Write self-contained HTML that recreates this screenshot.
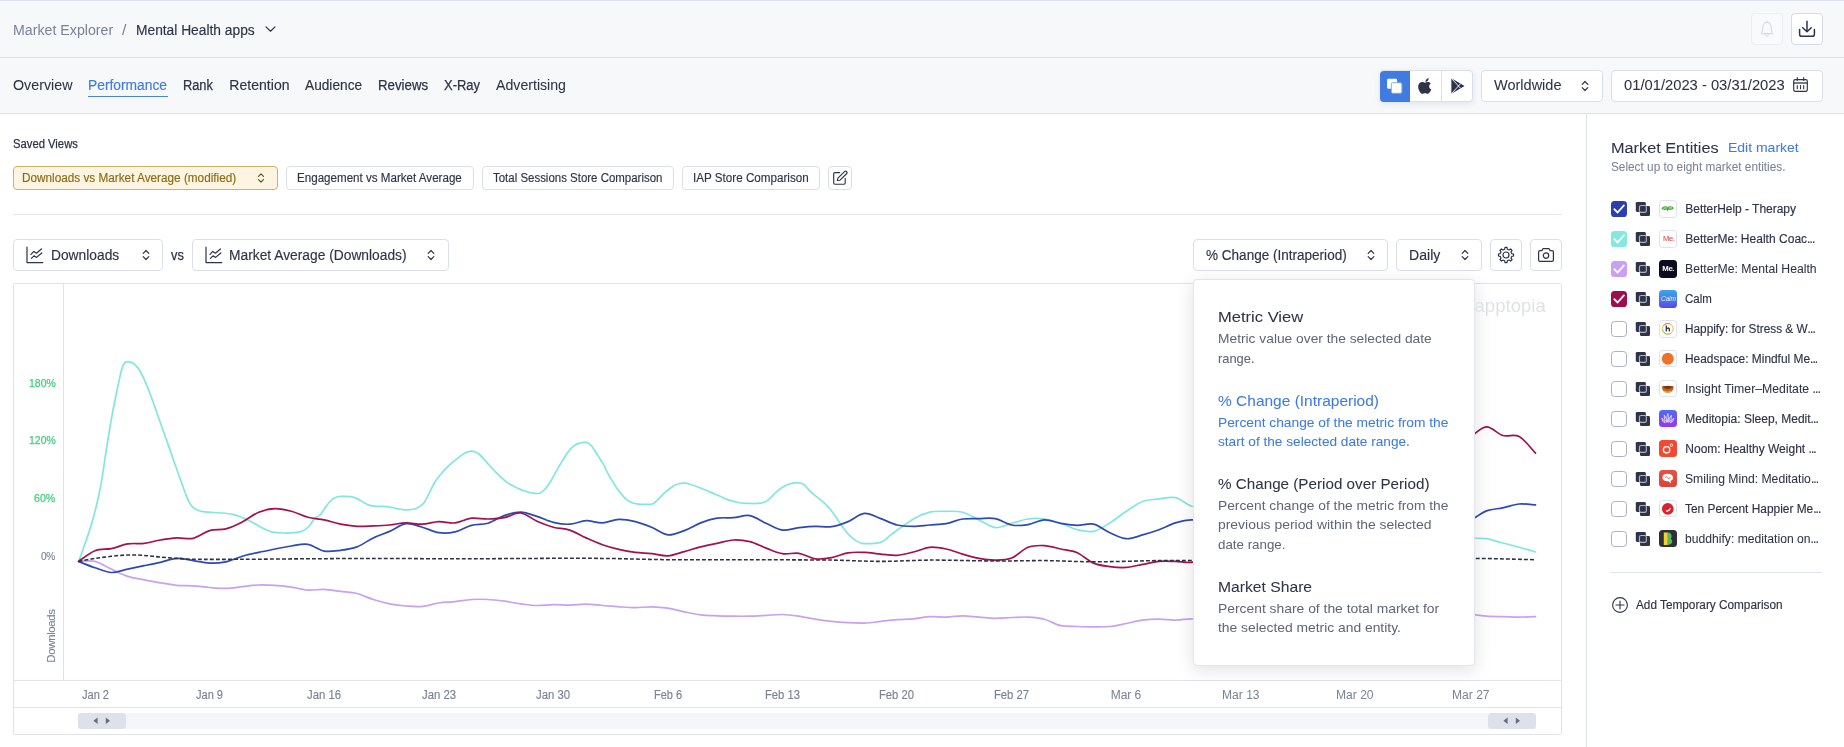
<!DOCTYPE html>
<html lang="en">
<head>
<meta charset="utf-8">
<title>Market Explorer - Mental Health apps</title>
<style>
*{box-sizing:border-box;margin:0;padding:0}
html,body{width:1844px;height:747px;overflow:hidden;background:#fff}
body{font-family:"Liberation Sans",sans-serif;position:relative;color:#2e3348}
.abs{position:absolute}
.t{position:absolute;white-space:nowrap;-webkit-text-stroke:0.25px currentColor}
.box{position:absolute;background:#fff;border:1px solid #dbdfe9;border-radius:4px}
.hdr{position:absolute;left:0;top:0;width:1844px;height:114px;background:#f7f8fa}
.hl{position:absolute;left:0;width:1844px;height:1px;background:#dde1ea}
svg{position:absolute;overflow:visible}
#w{position:absolute;left:0;top:0;width:1844px;height:747px;will-change:transform;background:#fff}
</style>
</head>
<body>
<div id="w">
<!-- header backgrounds -->
<div class="hdr"></div>
<div class="hl" style="top:0;background:#dfe3eb"></div>
<div class="hl" style="top:57px"></div>
<div class="hl" style="top:113px"></div>
<!-- sidebar border -->
<div class="abs" style="left:1586px;top:114px;width:1px;height:633px;background:#dfe2ec"></div>

<!-- breadcrumb chevron -->
<svg style="left:264px;top:24px" width="14" height="10" viewBox="0 0 14 10"><path d="M2 2.9 L6.5 7.2 L11 2.9" fill="none" stroke="#2e3348" stroke-width="1.2" stroke-linecap="round" stroke-linejoin="round"/></svg>

<!-- bell + download -->
<div class="box" style="left:1751px;top:13px;width:32px;height:32px;background:#f9fafc;border-color:#eceef4"></div>
<svg style="left:1751px;top:13px" width="32" height="32" viewBox="0 0 32 32"><path d="M10.4 20.6 C11.6 18.6 11.6 16.6 11.8 14.4 C12 11 13.8 9.4 16 9.4 C18.2 9.4 20 11 20.2 14.4 C20.4 16.6 20.4 18.6 21.6 20.6 Z M14.4 21 C14.6 22.6 15.2 23.2 16 23.2 C16.8 23.2 17.4 22.6 17.6 21 M16 9.4 V8" fill="none" stroke="#d9dce6" stroke-width="1.2" stroke-linejoin="round" stroke-linecap="round"/></svg>
<div class="box" style="left:1791px;top:13px;width:32px;height:32px;border-color:#d6dae6"></div>
<svg style="left:1791px;top:13px" width="32" height="32" viewBox="0 0 32 32"><path d="M16 8.2 V18.6 M11.7 14.8 L16 18.8 L20.3 14.8" fill="none" stroke="#2e3348" stroke-width="1.5" stroke-linecap="round" stroke-linejoin="round"/><path d="M8.6 16.4 V21.2 Q8.6 23.3 10.7 23.3 H21.3 Q23.4 23.3 23.4 21.2 V16.4" fill="none" stroke="#2e3348" stroke-width="1.5" stroke-linecap="round" stroke-linejoin="round"/></svg>

<!-- tab underline -->
<div class="abs" style="left:88px;top:96px;width:79.5px;height:1px;background:#4a82e2"></div>

<!-- store toggle -->
<div class="box" style="left:1380px;top:70px;width:93px;height:32px;box-shadow:0 2px 6px rgba(40,50,90,.10)"></div>
<div class="abs" style="left:1380px;top:70.5px;width:30px;height:31px;background:#3f7be0;border-radius:4px 0 0 4px"></div>
<div class="abs" style="left:1441px;top:71px;width:1px;height:30px;background:#dde1ec"></div>
<!-- stack icon white -->
<svg style="left:1386px;top:77px" width="20" height="20" viewBox="0 0 20 20"><rect x="1.1" y="1.7" width="10" height="10.1" rx="1.3" fill="#fff"/><rect x="5.3" y="5.7" width="10.6" height="10.6" rx="1.5" fill="#fff" stroke="#7aa4ea" stroke-width="0.9"/></svg>
<!-- apple -->
<svg style="left:1417.4px;top:76.9px" width="16.6" height="18.4" viewBox="0 0 18 20"><path d="M12.6 1.2 C12.7 2.3 12.3 3.3 11.7 4 C11.1 4.8 10.1 5.3 9.2 5.2 C9.1 4.2 9.6 3.2 10.1 2.6 C10.7 1.8 11.8 1.3 12.6 1.2 Z M15.6 13.6 C15.2 14.6 15 15 14.4 15.9 C13.7 17 12.7 18.3 11.5 18.3 C10.4 18.3 10.1 17.6 8.7 17.6 C7.3 17.6 6.9 18.3 5.8 18.3 C4.6 18.3 3.7 17.1 3 16 C1 13 0.8 9.4 2 7.6 C2.9 6.3 4.2 5.5 5.5 5.5 C6.8 5.5 7.6 6.2 8.7 6.2 C9.7 6.2 10.4 5.5 11.9 5.5 C13 5.5 14.2 6.1 15.1 7.2 C12.3 8.7 12.7 12.7 15.6 13.6 Z" fill="#2e3348"/></svg>
<!-- play -->
<svg style="left:1448px;top:76px" width="20" height="20" viewBox="0 0 20 20"><path d="M3.4 2.2 L16.6 10 L3.4 17.8 Z" fill="#2e3348"/><path d="M3.4 2.2 L12.6 12.4 M3.4 17.8 L12.6 7.6" stroke="#fff" stroke-width="0.9" fill="none"/></svg>

<!-- worldwide -->
<div class="box" style="left:1481px;top:70px;width:122px;height:32px"></div>
<svg style="left:1580px;top:79px" width="10" height="14" viewBox="0 0 10 14"><path d="M2.2 5.3 L5 2.5 L7.8 5.3 M2.2 8.7 L5 11.5 L7.8 8.7" fill="none" stroke="#2e3348" stroke-width="1.2" stroke-linecap="round" stroke-linejoin="round"/></svg>
<!-- date -->
<div class="box" style="left:1611px;top:70px;width:212px;height:32px"></div>
<svg style="left:1792px;top:76px" width="18" height="18" viewBox="0 0 18 18"><rect x="1.7" y="3.6" width="13.6" height="11.7" rx="1.6" fill="none" stroke="#2e3348" stroke-width="1.15"/><path d="M1.7 7 H15.3" stroke="#2e3348" stroke-width="1.3" fill="none"/><path d="M5.3 1.5 V4.5 M11.7 1.5 V4.5 M5.3 9.6 V12.7 M8.5 9.6 V12.7 M11.7 9.6 V12.7" stroke="#2e3348" stroke-width="1.1" fill="none" stroke-linecap="round"/></svg>

<!-- saved view chips -->
<div class="box" style="left:13px;top:166px;width:265px;height:24px;background:#fdf5e2;border-color:#d4af60"></div>
<svg style="left:255.5px;top:171px" width="10" height="14" viewBox="0 0 10 14"><path d="M2.5 5.3 L5 2.8 L7.5 5.3 M2.5 8.7 L5 11.2 L7.5 8.7" fill="none" stroke="#5a4a1a" stroke-width="1.1" stroke-linecap="round" stroke-linejoin="round"/></svg>
<div class="box" style="left:286px;top:166px;width:188px;height:24px"></div>
<div class="box" style="left:482px;top:166px;width:192px;height:24px"></div>
<div class="box" style="left:682px;top:166px;width:138px;height:24px"></div>
<div class="box" style="left:828px;top:166px;width:24px;height:24px"></div>
<svg style="left:832px;top:170px" width="16" height="16" viewBox="0 0 16 16"><path d="M7.7 2.6 H2.9 Q1.7 2.6 1.7 3.8 V13 Q1.7 14.2 2.9 14.2 H12 Q13.2 14.2 13.2 13 V8.4" fill="none" stroke="#2e3348" stroke-width="1.15" stroke-linecap="round"/><path d="M5.3 10.5 L5.9 8.2 L12.8 1.4 Q13.6 0.7 14.4 1.5 L14.8 1.9 Q15.5 2.7 14.8 3.5 L8 10.2 Z" fill="none" stroke="#2e3348" stroke-width="1.15" stroke-linejoin="round"/></svg>

<div class="abs" style="left:13px;top:214px;width:1549px;height:1px;background:#e3e6ee"></div>

<!-- metric selectors -->
<div class="box" style="left:13px;top:239px;width:150px;height:32px"></div>
<svg style="left:24.5px;top:245px" width="20" height="20" viewBox="0 0 20 20"><path d="M2 2.2 V17.6 H17.8" fill="none" stroke="#2e3348" stroke-width="1.2" stroke-linecap="round" stroke-linejoin="round"/><path d="M6 9.4 L8.8 6.4 L11.4 8.2 L16.4 4 M6.4 13.4 L9 10.8 L11.6 12.4 L16.8 8" fill="none" stroke="#2e3348" stroke-width="1.2" stroke-linecap="round" stroke-linejoin="round"/></svg>
<svg style="left:140.5px;top:248px" width="10" height="14" viewBox="0 0 10 14"><path d="M2.2 5.3 L5 2.5 L7.8 5.3 M2.2 8.7 L5 11.5 L7.8 8.7" fill="none" stroke="#2e3348" stroke-width="1.2" stroke-linecap="round" stroke-linejoin="round"/></svg>
<div class="box" style="left:192px;top:239px;width:257px;height:32px"></div>
<svg style="left:204px;top:245px" width="20" height="20" viewBox="0 0 20 20"><path d="M2 2.2 V17.6 H17.8" fill="none" stroke="#2e3348" stroke-width="1.2" stroke-linecap="round" stroke-linejoin="round"/><path d="M6 9.4 L8.8 6.4 L11.4 8.2 L16.4 4 M6.4 13.4 L9 10.8 L11.6 12.4 L16.8 8" fill="none" stroke="#2e3348" stroke-width="1.2" stroke-linecap="round" stroke-linejoin="round"/></svg>
<svg style="left:426px;top:248px" width="10" height="14" viewBox="0 0 10 14"><path d="M2.2 5.3 L5 2.5 L7.8 5.3 M2.2 8.7 L5 11.5 L7.8 8.7" fill="none" stroke="#2e3348" stroke-width="1.2" stroke-linecap="round" stroke-linejoin="round"/></svg>

<div class="box" style="left:1193px;top:239px;width:195px;height:32px"></div>
<svg style="left:1365.5px;top:248px" width="10" height="14" viewBox="0 0 10 14"><path d="M2.2 5.3 L5 2.5 L7.8 5.3 M2.2 8.7 L5 11.5 L7.8 8.7" fill="none" stroke="#2e3348" stroke-width="1.2" stroke-linecap="round" stroke-linejoin="round"/></svg>
<div class="box" style="left:1396px;top:239px;width:86px;height:32px"></div>
<svg style="left:1459.7px;top:248px" width="10" height="14" viewBox="0 0 10 14"><path d="M2.2 5.3 L5 2.5 L7.8 5.3 M2.2 8.7 L5 11.5 L7.8 8.7" fill="none" stroke="#2e3348" stroke-width="1.2" stroke-linecap="round" stroke-linejoin="round"/></svg>
<div class="box" style="left:1490px;top:239px;width:32px;height:32px"></div>
<svg style="left:1496px;top:245px" width="20" height="20" viewBox="0 0 20 20"><circle cx="10" cy="10" r="3" fill="none" stroke="#2e3348" stroke-width="1.2"/><path d="M8.62 4.26L8.99 2.47L11.01 2.47L11.38 4.26L13.08 4.97L14.61 3.96L16.04 5.39L15.03 6.92L15.74 8.62L17.53 8.99L17.53 11.01L15.74 11.38L15.03 13.08L16.04 14.61L14.61 16.04L13.08 15.03L11.38 15.74L11.01 17.53L8.99 17.53L8.62 15.74L6.92 15.03L5.39 16.04L3.96 14.61L4.97 13.08L4.26 11.38L2.47 11.01L2.47 8.99L4.26 8.62L4.97 6.92L3.96 5.39L5.39 3.96L6.92 4.97Z" fill="none" stroke="#2e3348" stroke-width="1.2" stroke-linejoin="round"/></svg>
<div class="box" style="left:1530px;top:239px;width:32px;height:32px"></div>
<svg style="left:1536px;top:245px" width="20" height="20" viewBox="0 0 20 20"><path d="M2.6 7 Q2.6 5.6 4 5.6 H5.8 L7.1 3.7 H12.9 L14.2 5.6 H16 Q17.4 5.6 17.4 7 V15 Q17.4 16.3 16 16.3 H4 Q2.6 16.3 2.6 15 Z" fill="none" stroke="#2e3348" stroke-width="1.2" stroke-linejoin="round"/><circle cx="10" cy="10.6" r="2.7" fill="none" stroke="#2e3348" stroke-width="1.2"/></svg>

<!-- chart frame -->
<div class="abs" style="left:13px;top:283px;width:1549px;height:452px;border:1px solid #dfe2ec;background:#fff;border-radius:1.5px"></div>
<div class="abs" style="left:63px;top:284px;width:1px;height:397px;background:#dfe2ec"></div>
<div class="abs" style="left:14px;top:680px;width:1547px;height:1px;background:#dfe2ec"></div>
<div class="abs" style="left:14px;top:707px;width:1547px;height:1px;background:#dfe2ec"></div>
<!-- scrollbar -->
<div class="abs" style="left:78px;top:713px;width:1458px;height:16px;background:#f5f6f9"></div>
<div class="abs" style="left:78px;top:713px;width:48px;height:16px;background:#dde1ea;border-radius:3.5px"></div>
<div class="abs" style="left:1488px;top:713px;width:48px;height:16px;background:#dde1ea;border-radius:3.5px"></div>
<svg style="left:78px;top:713px" width="48" height="16" viewBox="0 0 48 16"><path d="M19.6 4.6 V11 L15.4 7.8 Z M27.8 4.6 V11 L32 7.8 Z" fill="#666c80"/></svg>
<svg style="left:1488px;top:713px" width="48" height="16" viewBox="0 0 48 16"><path d="M19.6 4.6 V11 L15.4 7.8 Z M27.8 4.6 V11 L32 7.8 Z" fill="#666c80"/></svg>
<div class="t" style="left:51px;top:636px;font-size:11.5px;line-height:14px;color:#7b8296;transform:translate(-50%,-50%) rotate(-90deg);letter-spacing:-0.4px;-webkit-text-stroke-width:0.1px">Downloads</div>

<!-- chart lines -->
<svg style="left:0;top:0" width="1844" height="747" viewBox="0 0 1844 747">
<path d="M78.6 561.4C80.0 557.5 84.4 545.9 86.9 538.3C89.2 531.3 91.6 524.7 93.9 515.8C96.2 506.9 98.8 496.1 100.9 484.9C102.8 474.9 104.6 460.0 106.5 448.4C108.4 436.7 110.3 424.9 112.2 414.6C114.1 404.4 116.2 394.2 117.8 386.5C119.2 379.9 120.8 372.3 122.0 368.3C122.9 365.1 123.9 363.7 124.8 362.6C125.7 361.5 126.7 361.8 127.6 361.8C128.8 361.8 130.4 361.8 131.8 362.6C133.5 363.5 135.6 365.0 137.5 367.4C139.4 369.8 141.2 373.2 143.1 377.0C145.0 380.8 146.8 385.5 148.7 390.2C150.6 394.9 152.4 400.2 154.3 405.4C156.6 411.9 159.9 421.3 162.7 429.3C165.5 437.3 168.4 445.4 171.2 453.4C174.0 461.4 177.3 470.7 179.6 477.3C181.5 482.6 183.6 488.6 185.2 492.8C186.6 496.4 188.0 500.1 189.4 502.6C190.8 505.1 192.3 506.8 193.7 508.0C195.3 509.4 197.4 510.2 199.3 510.8C201.2 511.4 203.0 511.7 204.9 511.9C208.7 512.3 217.1 512.6 221.8 513.0C225.5 513.3 229.7 513.7 233.0 514.4C235.8 515.0 238.6 516.1 241.4 517.2C244.2 518.3 247.1 519.5 249.9 520.9C252.7 522.3 255.5 524.2 258.3 525.7C261.1 527.2 264.4 528.8 266.7 529.9C268.6 530.8 270.5 531.8 272.4 532.1C275.2 532.6 279.9 532.9 283.6 533.0C287.3 533.1 291.8 533.0 294.8 532.7C297.2 532.5 299.5 532.3 301.9 531.3C304.2 530.3 306.8 528.6 308.9 526.5C310.8 524.6 312.6 520.5 314.5 518.6C316.3 516.7 318.2 516.9 320.0 515.0C322.0 512.9 324.3 508.7 326.4 506.0C328.5 503.3 330.9 500.4 332.8 498.9C334.4 497.6 336.1 497.1 337.7 496.7C339.6 496.3 342.0 496.4 344.1 496.4C346.2 496.4 348.4 496.3 350.5 496.7C352.6 497.1 354.8 497.7 356.9 498.6C359.0 499.5 361.2 501.1 363.4 502.2C365.5 503.3 367.7 504.7 369.8 505.4C371.9 506.1 374.1 506.2 376.2 506.3C379.1 506.5 384.0 506.2 387.5 506.6C390.7 507.0 394.2 508.1 397.1 508.6C399.8 509.1 402.4 509.8 405.1 509.9C407.8 510.0 410.8 509.8 413.2 509.2C415.3 508.7 417.7 507.8 419.6 506.6C421.2 505.6 422.8 504.4 424.4 502.2C426.0 500.0 427.6 496.3 429.2 493.2C430.8 490.1 432.4 486.3 434.0 483.5C435.6 480.7 437.3 478.5 438.9 476.5C441.3 473.6 445.3 469.0 448.5 465.9C451.7 462.8 455.4 459.9 458.1 457.8C460.3 456.1 462.7 454.4 464.6 453.3C466.2 452.4 467.9 451.7 469.4 451.4C470.8 451.1 472.1 451.0 473.5 451.4C475.1 451.8 477.2 452.5 479.0 454.0C481.2 455.9 484.3 459.7 487.0 462.6C489.9 465.8 493.5 470.0 496.7 473.2C499.9 476.4 503.1 479.5 506.3 481.9C509.5 484.3 512.8 485.8 516.0 487.4C519.2 488.9 522.7 490.2 525.6 491.2C528.3 492.1 531.3 492.9 533.6 493.2C535.5 493.5 537.5 493.8 539.4 493.2C541.2 492.6 543.1 491.3 544.9 489.3C546.9 487.2 549.2 483.8 551.3 480.3C553.7 476.4 556.6 470.4 559.3 465.9C562.0 461.4 564.9 456.3 567.3 453.0C569.5 450.0 571.6 447.6 573.8 445.9C575.9 444.2 578.2 443.6 580.2 443.0C582.1 442.4 584.2 442.1 586.0 442.4C587.6 442.7 589.2 443.4 590.8 445.0C592.5 446.8 594.5 450.2 596.3 453.0C598.5 456.5 602.6 462.9 604.3 465.9C605.0 467.1 605.7 469.4 606.4 470.7C607.8 473.4 610.7 478.4 612.8 481.9C614.9 485.4 617.1 488.8 619.3 491.6C621.4 494.4 623.6 497.0 625.7 498.9C627.8 500.8 630.0 501.9 632.1 502.8C634.2 503.7 636.4 503.9 638.5 504.1C640.9 504.4 644.2 504.4 646.6 504.4C648.7 504.4 651.1 504.6 653.0 503.8C654.6 503.1 656.2 501.1 657.8 499.6C659.7 497.8 662.1 495.1 664.2 493.2C666.6 491.0 669.9 488.3 672.3 486.7C674.4 485.3 676.7 484.4 678.7 483.8C680.5 483.3 682.4 483.1 684.2 483.2C686.1 483.3 688.0 483.6 689.9 484.2C692.5 484.9 696.4 486.5 699.6 487.7C702.8 488.9 706.0 490.3 709.2 491.6C712.4 492.9 715.7 494.3 718.9 495.7C722.1 497.1 725.3 498.8 728.5 499.9C731.7 501.0 734.9 501.9 738.1 502.5C741.3 503.1 744.6 503.2 747.8 503.4C751.0 503.5 754.5 503.7 757.4 503.4C760.1 503.2 763.2 502.7 765.4 501.8C767.0 501.1 768.7 499.5 770.3 498.0C772.2 496.3 774.6 493.4 776.7 491.6C779.1 489.6 782.0 487.5 784.7 486.1C787.4 484.7 790.3 483.7 792.7 483.2C794.9 482.7 797.3 482.6 799.2 482.9C800.8 483.1 802.4 483.6 804.0 484.8C805.6 486.0 807.2 488.3 808.8 489.9C810.7 491.7 813.1 493.9 815.2 495.7C817.6 497.8 820.9 500.0 823.3 502.2C825.4 504.1 827.6 506.1 829.7 508.6C831.8 511.1 834.0 514.3 836.1 517.3C838.2 520.3 840.4 524.0 842.5 526.9C844.6 529.8 846.9 532.6 849.0 534.9C851.1 537.1 853.3 539.0 855.4 540.4C857.5 541.8 859.7 542.8 861.8 543.3C864.2 543.8 867.1 543.7 869.8 543.6C872.8 543.5 877.1 543.1 879.5 542.6C881.1 542.2 882.7 541.5 884.3 540.4C886.2 539.1 888.6 536.5 890.7 534.9C895.6 531.3 907.0 522.8 913.5 519.0C918.9 515.8 924.4 513.5 929.8 512.2C935.2 510.9 940.7 511.3 946.2 511.3C951.7 511.3 957.1 510.8 962.6 512.2C968.1 513.6 973.5 517.3 979.0 519.9C984.4 522.5 989.9 527.0 995.3 527.6C1000.8 528.2 1006.2 524.7 1011.7 523.3C1017.2 521.9 1022.6 519.7 1028.1 519.0C1033.5 518.3 1039.0 518.3 1044.4 519.0C1049.9 519.7 1055.3 521.5 1060.8 523.3C1066.3 525.1 1071.8 528.4 1077.2 529.7C1082.6 531.0 1088.1 532.5 1093.5 531.4C1099.0 530.3 1104.4 526.2 1109.9 522.9C1115.4 519.6 1120.8 514.9 1126.3 511.3C1131.7 507.7 1137.2 503.6 1142.6 501.5C1148.0 499.4 1153.5 499.5 1159.0 498.9C1164.5 498.3 1169.9 496.4 1175.4 497.6C1180.9 498.8 1186.3 504.6 1191.8 506.2C1197.2 507.8 1202.7 506.5 1208.1 507.0C1213.5 507.5 1219.0 508.2 1224.5 509.2C1232.7 510.6 1246.3 513.6 1257.2 515.6C1270.8 518.1 1289.9 521.7 1306.3 524.2C1322.7 526.7 1339.1 528.8 1355.5 530.6C1371.9 532.4 1388.2 533.7 1404.6 534.9C1421.0 536.1 1442.8 537.3 1453.7 537.9C1459.1 538.2 1464.6 538.2 1470.0 538.3C1475.5 538.4 1480.9 537.9 1486.4 538.7C1491.9 539.5 1497.3 541.6 1502.8 543.0C1508.3 544.4 1513.8 545.8 1519.2 547.3C1524.6 548.8 1532.8 551.2 1535.5 552.0" fill="none" stroke="#82e6e0" stroke-width="1.7" stroke-linecap="round" stroke-linejoin="round"/>
<path d="M78.6 561.4C81.3 561.4 89.5 560.1 95.0 561.4C100.4 562.7 105.9 566.6 111.3 569.1C116.8 571.6 122.2 574.6 127.7 576.4C133.2 578.2 138.7 578.7 144.1 579.8C149.5 580.9 155.0 581.9 160.4 582.8C165.9 583.7 171.3 584.9 176.8 585.4C182.3 585.9 187.7 585.5 193.2 585.8C198.7 586.1 204.1 587.1 209.6 587.5C215.0 587.9 220.5 588.5 225.9 588.4C231.4 588.3 236.8 587.3 242.3 586.7C247.8 586.1 253.2 585.2 258.7 585.0C264.1 584.8 269.6 585.1 275.0 585.4C280.4 585.8 285.9 586.3 291.4 587.1C296.9 587.9 302.4 589.7 307.8 590.1C313.2 590.5 318.7 589.1 324.1 589.3C329.6 589.5 335.0 590.7 340.5 591.4C346.0 592.1 351.4 592.2 356.9 593.5C362.4 594.8 367.9 597.8 373.3 599.5C378.7 601.2 384.2 602.7 389.6 603.8C395.1 604.9 400.5 605.6 406.0 606.0C411.5 606.4 416.9 606.9 422.4 606.4C427.8 605.9 433.3 603.8 438.7 603.0C444.1 602.2 449.6 602.3 455.1 601.7C460.6 601.1 466.0 599.9 471.5 599.5C477.0 599.1 482.4 599.2 487.9 599.5C493.3 599.8 498.8 600.5 504.2 601.2C509.6 601.9 515.1 603.1 520.6 603.8C526.1 604.5 531.5 605.4 537.0 605.5C542.4 605.6 547.9 604.8 553.3 604.7C558.8 604.6 564.2 605.2 569.7 605.1C575.2 605.0 580.7 604.1 586.1 604.2C591.5 604.3 597.0 605.1 602.4 605.5C607.8 605.9 613.3 606.4 618.8 606.8C624.3 607.2 629.7 607.7 635.2 607.7C640.7 607.7 646.2 606.7 651.6 606.8C657.0 606.9 662.5 607.3 667.9 608.1C673.3 609.0 678.8 610.8 684.3 611.9C689.8 613.0 695.2 614.2 700.7 614.9C706.1 615.5 711.6 615.6 717.0 615.8C722.5 616.0 727.9 616.1 733.4 616.2C738.9 616.3 744.3 616.3 749.8 616.2C755.2 616.1 760.7 615.7 766.1 615.4C771.6 615.1 777.0 614.4 782.5 614.5C788.0 614.6 793.4 615.4 798.9 616.2C804.4 617.0 809.8 618.3 815.3 619.2C820.7 620.1 826.2 620.8 831.6 621.4C837.1 622.0 842.5 622.4 848.0 622.7C853.5 623.0 858.9 623.3 864.4 623.1C869.8 622.9 875.3 622.0 880.7 621.4C886.2 620.8 891.6 620.1 897.1 619.7C902.6 619.3 908.0 619.3 913.5 618.8C918.9 618.3 924.4 617.0 929.8 616.7C935.2 616.4 940.7 617.2 946.2 617.1C951.7 617.0 957.1 615.8 962.6 615.8C968.1 615.8 973.5 616.7 979.0 617.1C984.4 617.5 989.9 618.3 995.3 618.4C1000.8 618.5 1006.2 617.7 1011.7 617.5C1017.2 617.3 1022.6 616.8 1028.1 617.1C1033.5 617.4 1039.0 617.8 1044.4 619.2C1049.9 620.6 1055.3 624.5 1060.8 625.7C1066.3 626.9 1071.8 626.3 1077.2 626.5C1082.6 626.7 1088.1 626.9 1093.5 626.9C1099.0 626.9 1104.4 627.1 1109.9 626.5C1115.4 625.9 1120.8 624.6 1126.3 623.5C1131.7 622.4 1137.2 620.8 1142.6 620.1C1148.0 619.4 1153.5 619.2 1159.0 619.2C1164.5 619.2 1169.9 620.2 1175.4 620.1C1180.9 620.0 1186.3 618.9 1191.8 618.8C1213.6 618.4 1273.6 618.0 1306.3 617.5C1333.6 617.1 1360.9 616.3 1388.2 615.8C1415.5 615.3 1453.6 614.4 1470.0 614.5C1475.5 614.5 1480.9 615.8 1486.4 616.2C1491.9 616.6 1497.3 616.6 1502.8 616.7C1508.3 616.8 1513.8 617.1 1519.2 617.1C1524.6 617.1 1532.8 616.8 1535.5 616.7" fill="none" stroke="#c9a0f3" stroke-width="1.7" stroke-linecap="round" stroke-linejoin="round"/>
<path d="M78.6 561.4C81.3 562.5 89.5 565.9 95.0 567.8C100.4 569.6 105.9 572.3 111.3 572.5C116.8 572.7 122.2 570.2 127.7 569.1C133.2 568.0 138.7 566.8 144.1 565.7C149.5 564.6 155.0 563.5 160.4 562.3C165.9 561.1 171.3 558.7 176.8 558.4C182.3 558.1 187.7 559.8 193.2 560.6C198.7 561.4 204.1 562.9 209.6 563.1C215.0 563.3 220.5 562.9 225.9 561.8C231.4 560.7 236.8 557.9 242.3 556.3C247.8 554.7 253.2 553.6 258.7 552.4C264.1 551.2 269.6 550.1 275.0 549.0C280.4 547.9 285.9 546.8 291.4 546.0C296.9 545.2 302.4 543.4 307.8 544.3C313.2 545.1 318.7 550.1 324.1 551.1C329.6 552.1 335.0 551.0 340.5 550.3C346.0 549.6 351.4 549.0 356.9 546.9C362.4 544.8 367.9 540.5 373.3 537.9C378.7 535.3 384.2 533.8 389.6 531.4C395.1 529.0 400.5 524.4 406.0 523.7C411.5 523.0 416.9 525.7 422.4 527.2C427.8 528.7 433.3 531.9 438.7 532.7C444.1 533.5 449.6 533.1 455.1 531.9C460.6 530.7 466.0 526.8 471.5 525.4C477.0 524.0 482.4 524.9 487.9 523.3C493.3 521.7 498.8 517.4 504.2 515.6C509.6 513.8 515.1 512.1 520.6 512.2C526.1 512.3 531.5 514.7 537.0 516.4C542.4 518.1 547.9 521.1 553.3 522.4C558.8 523.7 564.2 524.5 569.7 524.2C575.2 523.9 580.7 520.9 586.1 520.7C591.5 520.5 597.0 523.1 602.4 522.9C607.8 522.7 613.3 519.6 618.8 519.4C624.3 519.2 629.7 520.3 635.2 521.6C640.7 522.9 646.2 525.0 651.6 527.2C657.0 529.4 662.5 534.3 667.9 534.9C673.3 535.5 678.8 532.6 684.3 530.6C689.8 528.6 695.2 525.0 700.7 522.9C706.1 520.8 711.6 519.1 717.0 518.2C722.5 517.3 727.9 518.1 733.4 517.7C738.9 517.3 744.3 514.7 749.8 515.6C755.2 516.5 760.7 520.9 766.1 523.3C771.6 525.7 777.0 529.4 782.5 530.1C788.0 530.8 793.4 528.2 798.9 527.6C804.4 527.0 809.8 526.4 815.3 526.3C820.7 526.2 826.2 527.5 831.6 526.7C837.1 525.9 842.5 523.8 848.0 521.6C853.5 519.4 858.9 513.9 864.4 513.4C869.8 512.9 875.3 516.7 880.7 518.6C886.2 520.5 891.6 523.7 897.1 525.0C902.6 526.3 908.0 526.3 913.5 526.3C918.9 526.3 924.4 525.4 929.8 525.0C935.2 524.6 940.7 524.7 946.2 523.7C951.7 522.7 957.1 519.8 962.6 519.0C968.1 518.2 973.5 518.7 979.0 518.6C984.4 518.5 989.9 517.5 995.3 518.6C1000.8 519.7 1006.2 524.0 1011.7 525.0C1017.2 526.0 1022.6 525.5 1028.1 524.6C1033.5 523.8 1039.0 520.1 1044.4 519.9C1049.9 519.7 1055.3 522.4 1060.8 523.3C1066.3 524.2 1071.8 525.2 1077.2 525.4C1082.6 525.5 1088.1 523.0 1093.5 524.2C1099.0 525.4 1104.4 530.3 1109.9 532.7C1115.4 535.1 1120.8 538.3 1126.3 538.7C1131.7 539.1 1137.2 536.4 1142.6 534.9C1148.0 533.4 1153.5 531.7 1159.0 529.7C1164.5 527.7 1169.9 524.5 1175.4 522.9C1180.9 521.3 1186.3 520.0 1191.8 519.9C1205.4 519.8 1235.4 521.3 1257.2 522.0C1279.0 522.7 1300.9 523.7 1322.7 524.2C1344.5 524.7 1366.4 525.0 1388.2 525.0C1410.0 525.0 1440.1 525.0 1453.7 524.2C1459.1 523.9 1464.6 522.5 1470.0 520.3C1475.5 518.1 1480.9 513.0 1486.4 510.9C1491.9 508.8 1497.3 509.0 1502.8 507.9C1508.3 506.8 1513.8 504.5 1519.2 504.0C1524.6 503.5 1532.8 504.8 1535.5 504.9" fill="none" stroke="#2f49b3" stroke-width="1.7" stroke-linecap="round" stroke-linejoin="round"/>
<path d="M78.6 561.4C81.3 559.6 89.5 552.8 95.0 550.7C100.4 548.6 105.9 549.7 111.3 548.6C116.8 547.5 122.2 544.8 127.7 543.9C133.2 543.0 138.7 544.0 144.1 543.4C149.5 542.8 155.0 540.9 160.4 540.0C165.9 539.1 171.3 538.2 176.8 537.9C182.3 537.6 187.7 539.5 193.2 538.3C198.7 537.1 204.1 532.2 209.6 530.6C215.0 529.0 220.5 530.3 225.9 528.9C231.4 527.5 236.8 524.8 242.3 522.0C247.8 519.2 253.2 514.4 258.7 512.2C264.1 510.0 269.6 508.8 275.0 508.7C280.4 508.5 285.9 509.9 291.4 511.3C296.9 512.7 302.4 515.9 307.8 517.3C313.2 518.7 318.7 518.8 324.1 519.9C329.6 521.0 335.0 523.1 340.5 524.2C346.0 525.3 351.4 526.0 356.9 526.3C362.4 526.6 367.9 526.1 373.3 525.9C378.7 525.7 384.2 525.5 389.6 525.0C395.1 524.5 400.5 523.0 406.0 522.9C411.5 522.8 416.9 524.4 422.4 524.2C427.8 524.0 433.3 521.8 438.7 521.6C444.1 521.4 449.6 523.5 455.1 522.9C460.6 522.3 466.0 518.8 471.5 518.2C477.0 517.6 482.4 519.1 487.9 519.0C493.3 518.9 498.8 518.7 504.2 517.7C509.6 516.7 515.1 512.4 520.6 513.0C526.1 513.6 531.5 518.8 537.0 521.2C542.4 523.6 547.9 525.7 553.3 527.2C558.8 528.7 564.2 528.3 569.7 530.1C575.2 531.9 580.7 535.5 586.1 537.9C591.5 540.3 597.0 542.8 602.4 544.7C607.8 546.6 613.3 548.1 618.8 549.4C624.3 550.7 629.7 551.7 635.2 552.4C640.7 553.1 646.2 553.1 651.6 553.7C657.0 554.3 662.5 556.1 667.9 555.8C673.3 555.4 678.8 553.1 684.3 551.6C689.8 550.1 695.2 548.3 700.7 546.9C706.1 545.5 711.6 544.5 717.0 543.4C722.5 542.2 727.9 540.3 733.4 540.0C738.9 539.7 744.3 540.4 749.8 541.7C755.2 543.0 760.7 546.1 766.1 548.1C771.6 550.1 777.0 552.8 782.5 553.7C788.0 554.6 793.4 552.5 798.9 553.3C804.4 554.1 809.8 558.1 815.3 558.8C820.7 559.5 826.2 558.6 831.6 557.6C837.1 556.6 842.5 553.7 848.0 552.8C853.5 551.9 858.9 552.2 864.4 552.4C869.8 552.6 875.3 553.6 880.7 554.1C886.2 554.6 891.6 555.7 897.1 555.4C902.6 555.1 908.0 553.4 913.5 552.0C918.9 550.7 924.4 547.8 929.8 547.3C935.2 546.8 940.7 547.9 946.2 549.0C951.7 550.1 957.1 552.5 962.6 554.1C968.1 555.7 973.5 557.4 979.0 558.4C984.4 559.4 989.9 560.2 995.3 560.1C1000.8 560.0 1006.2 560.1 1011.7 558.0C1017.2 555.9 1022.6 549.4 1028.1 547.3C1033.5 545.2 1039.0 545.3 1044.4 545.6C1049.9 545.9 1055.3 547.8 1060.8 549.0C1066.3 550.2 1071.8 550.4 1077.2 552.8C1082.6 555.1 1088.1 560.8 1093.5 563.1C1099.0 565.4 1104.4 565.9 1109.9 566.6C1115.4 567.3 1120.8 567.8 1126.3 567.4C1131.7 567.0 1137.2 565.4 1142.6 564.4C1148.0 563.4 1153.5 561.9 1159.0 561.4C1164.5 560.9 1169.9 561.3 1175.4 561.4C1180.9 561.5 1186.3 563.1 1191.8 562.3C1200.0 561.1 1213.6 558.6 1224.5 554.1C1238.1 548.5 1257.2 537.0 1273.6 528.4C1290.0 519.8 1306.3 511.3 1322.7 502.7C1339.1 494.1 1355.4 485.6 1371.8 477.0C1388.2 468.4 1407.2 456.2 1420.9 451.3C1431.8 447.4 1445.5 450.2 1453.7 447.9C1459.1 446.3 1464.6 440.7 1470.0 437.2C1475.5 433.7 1480.9 427.2 1486.4 426.9C1491.9 426.6 1497.3 433.9 1502.8 435.5C1508.3 437.1 1513.8 433.7 1519.2 436.6C1524.6 439.5 1532.8 450.4 1535.5 453.1" fill="none" stroke="#a3114e" stroke-width="1.7" stroke-linecap="round" stroke-linejoin="round"/>
<path d="M78.6 561.4C81.3 560.9 89.5 559.2 95.0 558.4C100.4 557.6 105.9 556.9 111.3 556.3C116.8 555.7 122.2 555.1 127.7 555.0C133.2 554.9 138.7 555.0 144.1 555.4C149.5 555.7 155.0 556.6 160.4 557.1C165.9 557.6 171.3 558.0 176.8 558.4C182.3 558.8 187.7 559.2 193.2 559.3C204.1 559.4 225.9 559.4 242.3 559.3C261.4 559.2 286.0 558.9 307.8 558.8C329.6 558.7 351.5 558.4 373.3 558.4C397.9 558.4 427.8 558.8 455.1 558.8C482.4 558.8 512.5 558.5 537.0 558.4C558.8 558.3 580.6 558.2 602.4 558.4C624.2 558.6 646.1 559.5 667.9 559.7C689.7 559.9 711.6 559.6 733.4 559.7C760.7 559.8 807.0 559.8 831.6 560.1C848.0 560.3 864.3 561.4 880.7 561.4C897.1 561.4 913.4 560.2 929.8 560.1C948.9 560.0 976.2 560.9 995.3 561.0C1011.7 561.1 1028.0 560.5 1044.4 560.6C1060.8 560.7 1077.1 561.8 1093.5 561.8C1112.6 561.8 1142.6 560.8 1159.0 560.6C1169.9 560.5 1180.9 560.7 1191.8 560.6C1216.3 560.5 1268.1 560.0 1306.3 559.7C1352.7 559.3 1431.8 558.4 1470.0 558.4C1491.8 558.4 1524.6 559.5 1535.5 559.7" fill="none" stroke="#2b3044" stroke-dasharray="3.9 2.1" stroke-width="1.55" stroke-linecap="butt" stroke-linejoin="round"/>
</svg>

<!-- dropdown panel -->
<div class="abs" style="left:1193px;top:279px;width:282px;height:387px;background:#fff;border:1px solid #e3e5ee;border-radius:4px;box-shadow:0 4px 18px rgba(20,25,40,.13)"></div>

<!-- sidebar -->
<div class="abs" style="left:1611px;top:201px;width:16px;height:16px;border-radius:3.6px;background:#2a40b0"></div><svg style="left:1611px;top:201px" width="16" height="16" viewBox="0 0 16 16"><path d="M3.3 8.2 L6.6 11.5 L12.9 4.4" fill="none" stroke="#fff" stroke-width="1.8" stroke-linecap="round" stroke-linejoin="round"/></svg>
<svg style="left:1635.4px;top:201.4px" width="16" height="16" viewBox="0 0 16 16"><rect x="0.8" y="0.9" width="10" height="10" rx="1.4" fill="#2e3348"/><rect x="5" y="5" width="10" height="10.1" rx="1.4" fill="#2e3348"/><rect x="4.45" y="4.45" width="6.9" height="6.9" rx="1.6" fill="none" stroke="#aeb2c0" stroke-width="1.15"/></svg>
<div class="abs" style="left:1659.3px;top:200.2px;width:17.6px;height:17.6px;border-radius:3.5px;overflow:hidden;background:#fff;border:1px solid #dde2ec;"><svg style="left:-1px;top:-1px" width="17.6" height="17.6" viewBox="0 0 17.6 17.6"><path d="M2.4 8.2 Q4.4 5.4 8 6.6 L8.6 7.6 L9.4 6.6 Q13 5.4 15 8 Q12.6 10.8 9.6 9.4 L8.4 11.6 L7.9 9.4 Q4.6 10.8 2.4 8.2 Z" fill="#3aa52e"/><path d="M4.6 8.1 L7.4 8 M10 8 L12.8 7.9" stroke="#fff" stroke-width=".8" stroke-linecap="round"/></svg></div>
<div class="abs" style="left:1611px;top:230.9px;width:16px;height:16px;border-radius:3.6px;background:#84e8de"></div><svg style="left:1611px;top:230.9px" width="16" height="16" viewBox="0 0 16 16"><path d="M3.3 8.2 L6.6 11.5 L12.9 4.4" fill="none" stroke="#fff" stroke-width="1.8" stroke-linecap="round" stroke-linejoin="round"/></svg>
<svg style="left:1635.4px;top:231.3px" width="16" height="16" viewBox="0 0 16 16"><rect x="0.8" y="0.9" width="10" height="10" rx="1.4" fill="#2e3348"/><rect x="5" y="5" width="10" height="10.1" rx="1.4" fill="#2e3348"/><rect x="4.45" y="4.45" width="6.9" height="6.9" rx="1.6" fill="none" stroke="#aeb2c0" stroke-width="1.15"/></svg>
<div class="abs" style="left:1659.3px;top:230.1px;width:17.6px;height:17.6px;border-radius:3.5px;overflow:hidden;background:#fff;border:1px solid #dde2ec;"><div class="t" style="left:2.6px;top:3.4px;font-size:7.6px;line-height:9px;color:#dc3535;letter-spacing:-.25px;-webkit-text-stroke:0">Me.</div></div>
<div class="abs" style="left:1611px;top:260.9px;width:16px;height:16px;border-radius:3.6px;background:#c9a0f5"></div><svg style="left:1611px;top:260.9px" width="16" height="16" viewBox="0 0 16 16"><path d="M3.3 8.2 L6.6 11.5 L12.9 4.4" fill="none" stroke="#fff" stroke-width="1.8" stroke-linecap="round" stroke-linejoin="round"/></svg>
<svg style="left:1635.4px;top:261.3px" width="16" height="16" viewBox="0 0 16 16"><rect x="0.8" y="0.9" width="10" height="10" rx="1.4" fill="#2e3348"/><rect x="5" y="5" width="10" height="10.1" rx="1.4" fill="#2e3348"/><rect x="4.45" y="4.45" width="6.9" height="6.9" rx="1.6" fill="none" stroke="#aeb2c0" stroke-width="1.15"/></svg>
<div class="abs" style="left:1659.3px;top:260.1px;width:17.6px;height:17.6px;border-radius:3.5px;overflow:hidden;background:#0b0c1e;"><div class="t" style="left:3px;top:4.2px;font-size:7.8px;line-height:9px;color:#fff;font-weight:bold;letter-spacing:-.4px;-webkit-text-stroke:0">Me.</div></div>
<div class="abs" style="left:1611px;top:290.9px;width:16px;height:16px;border-radius:3.6px;background:#9f0d4b"></div><svg style="left:1611px;top:290.9px" width="16" height="16" viewBox="0 0 16 16"><path d="M3.3 8.2 L6.6 11.5 L12.9 4.4" fill="none" stroke="#fff" stroke-width="1.8" stroke-linecap="round" stroke-linejoin="round"/></svg>
<svg style="left:1635.4px;top:291.2px" width="16" height="16" viewBox="0 0 16 16"><rect x="0.8" y="0.9" width="10" height="10" rx="1.4" fill="#2e3348"/><rect x="5" y="5" width="10" height="10.1" rx="1.4" fill="#2e3348"/><rect x="4.45" y="4.45" width="6.9" height="6.9" rx="1.6" fill="none" stroke="#aeb2c0" stroke-width="1.15"/></svg>
<div class="abs" style="left:1659.3px;top:290.1px;width:17.6px;height:17.6px;border-radius:3.5px;overflow:hidden;background:linear-gradient(180deg,#3aa6ea 0%,#4a78ea 55%,#5b46e2 100%);"><div class="t" style="left:1.8px;top:5px;font-size:6.6px;line-height:8px;color:#e6eeff;font-style:italic;letter-spacing:-.2px;-webkit-text-stroke:0">Calm</div></div>
<div class="abs" style="left:1611px;top:320.8px;width:16px;height:16px;border-radius:3.6px;background:#fff;border:1px solid #a9b0c8"></div>
<svg style="left:1635.4px;top:321.2px" width="16" height="16" viewBox="0 0 16 16"><rect x="0.8" y="0.9" width="10" height="10" rx="1.4" fill="#2e3348"/><rect x="5" y="5" width="10" height="10.1" rx="1.4" fill="#2e3348"/><rect x="4.45" y="4.45" width="6.9" height="6.9" rx="1.6" fill="none" stroke="#aeb2c0" stroke-width="1.15"/></svg>
<div class="abs" style="left:1659.3px;top:320px;width:17.6px;height:17.6px;border-radius:3.5px;overflow:hidden;background:#fff;border:1px solid #dde2ec;"><svg style="left:-1px;top:-1px" width="17.6" height="17.6" viewBox="0 0 17.6 17.6"><circle cx="8.8" cy="8.8" r="5.4" fill="#fff" stroke="#f4b63c" stroke-width="1"/><path d="M3.6 10.2 A5.4 5.4 0 0 0 12.6 12.6" stroke="#7ccf6a" stroke-width="1" fill="none"/><path d="M4.4 5.6 A5.4 5.4 0 0 1 11 3.9" stroke="#ef6a8a" stroke-width="1" fill="none"/><path d="M7.3 5.6 V11.6 M7.3 9.2 Q8.9 7.2 10.3 8.6 V11.6" stroke="#2e3348" stroke-width="1.3" fill="none"/></svg></div>
<div class="abs" style="left:1611px;top:350.8px;width:16px;height:16px;border-radius:3.6px;background:#fff;border:1px solid #a9b0c8"></div>
<svg style="left:1635.4px;top:351.1px" width="16" height="16" viewBox="0 0 16 16"><rect x="0.8" y="0.9" width="10" height="10" rx="1.4" fill="#2e3348"/><rect x="5" y="5" width="10" height="10.1" rx="1.4" fill="#2e3348"/><rect x="4.45" y="4.45" width="6.9" height="6.9" rx="1.6" fill="none" stroke="#aeb2c0" stroke-width="1.15"/></svg>
<div class="abs" style="left:1659.3px;top:349.9px;width:17.6px;height:17.6px;border-radius:3.5px;overflow:hidden;background:#fff;border:1px solid #dde2ec;"><svg style="left:-1px;top:-1px" width="17.6" height="17.6" viewBox="0 0 17.6 17.6"><circle cx="8.8" cy="8.8" r="6" fill="#ee7326"/></svg></div>
<div class="abs" style="left:1611px;top:380.7px;width:16px;height:16px;border-radius:3.6px;background:#fff;border:1px solid #a9b0c8"></div>
<svg style="left:1635.4px;top:381.1px" width="16" height="16" viewBox="0 0 16 16"><rect x="0.8" y="0.9" width="10" height="10" rx="1.4" fill="#2e3348"/><rect x="5" y="5" width="10" height="10.1" rx="1.4" fill="#2e3348"/><rect x="4.45" y="4.45" width="6.9" height="6.9" rx="1.6" fill="none" stroke="#aeb2c0" stroke-width="1.15"/></svg>
<div class="abs" style="left:1659.3px;top:379.9px;width:17.6px;height:17.6px;border-radius:3.5px;overflow:hidden;background:#fff;border:1px solid #dde2ec;"><svg style="left:-1px;top:-1px" width="17.6" height="17.6" viewBox="0 0 17.6 17.6"><path d="M2.8 6.4 Q8.8 5 14.8 6.4 Q14.4 12.6 8.8 12.8 Q3.2 12.6 2.8 6.4 Z" fill="#c0651c"/><path d="M3.4 6.6 Q8.8 5.6 14.2 6.6 Q12 9 8.8 9 Q5.6 9 3.4 6.6 Z" fill="#7a3410"/><path d="M5 11.2 Q8.8 13 12.6 11.2" stroke="#f2b25a" stroke-width="1" fill="none"/></svg></div>
<div class="abs" style="left:1611px;top:410.6px;width:16px;height:16px;border-radius:3.6px;background:#fff;border:1px solid #a9b0c8"></div>
<svg style="left:1635.4px;top:411px" width="16" height="16" viewBox="0 0 16 16"><rect x="0.8" y="0.9" width="10" height="10" rx="1.4" fill="#2e3348"/><rect x="5" y="5" width="10" height="10.1" rx="1.4" fill="#2e3348"/><rect x="4.45" y="4.45" width="6.9" height="6.9" rx="1.6" fill="none" stroke="#aeb2c0" stroke-width="1.15"/></svg>
<div class="abs" style="left:1659.3px;top:409.8px;width:17.6px;height:17.6px;border-radius:3.5px;overflow:hidden;background:linear-gradient(180deg,#4d6cf6 0%,#7a49f2 60%,#9a35ee 100%);"><svg style="left:0px;top:0px" width="17.6" height="17.6" viewBox="0 0 17.6 17.6"><path d="M8.8 3.6 Q10.8 6.8 8.8 12.2 Q6.8 6.8 8.8 3.6 Z M5.2 5.2 Q7.6 7.4 7.8 12.4 Q4.6 10.6 5.2 5.2 Z M12.4 5.2 Q10 7.4 9.8 12.4 Q13 10.6 12.4 5.2 Z M2.8 8 Q4.8 9.6 6.2 12.8 Q3 12.2 2.8 8 Z M14.8 8 Q12.8 9.6 11.4 12.8 Q14.6 12.2 14.8 8 Z" fill="none" stroke="#efe9ff" stroke-width=".8"/></svg></div>
<div class="abs" style="left:1611px;top:440.6px;width:16px;height:16px;border-radius:3.6px;background:#fff;border:1px solid #a9b0c8"></div>
<svg style="left:1635.4px;top:441px" width="16" height="16" viewBox="0 0 16 16"><rect x="0.8" y="0.9" width="10" height="10" rx="1.4" fill="#2e3348"/><rect x="5" y="5" width="10" height="10.1" rx="1.4" fill="#2e3348"/><rect x="4.45" y="4.45" width="6.9" height="6.9" rx="1.6" fill="none" stroke="#aeb2c0" stroke-width="1.15"/></svg>
<div class="abs" style="left:1659.3px;top:439.8px;width:17.6px;height:17.6px;border-radius:3.5px;overflow:hidden;background:#f04a30;"><svg style="left:0px;top:0px" width="17.6" height="17.6" viewBox="0 0 17.6 17.6"><circle cx="7.6" cy="9.8" r="3.2" fill="none" stroke="#fff" stroke-width="1.3"/><circle cx="12.4" cy="5.2" r="1.25" fill="none" stroke="#fff" stroke-width=".9"/></svg></div>
<div class="abs" style="left:1611px;top:470.6px;width:16px;height:16px;border-radius:3.6px;background:#fff;border:1px solid #a9b0c8"></div>
<svg style="left:1635.4px;top:470.9px" width="16" height="16" viewBox="0 0 16 16"><rect x="0.8" y="0.9" width="10" height="10" rx="1.4" fill="#2e3348"/><rect x="5" y="5" width="10" height="10.1" rx="1.4" fill="#2e3348"/><rect x="4.45" y="4.45" width="6.9" height="6.9" rx="1.6" fill="none" stroke="#aeb2c0" stroke-width="1.15"/></svg>
<div class="abs" style="left:1659.3px;top:469.8px;width:17.6px;height:17.6px;border-radius:3.5px;overflow:hidden;background:linear-gradient(180deg,#e8503f,#d9463a);"><svg style="left:0px;top:0px" width="17.6" height="17.6" viewBox="0 0 17.6 17.6"><path d="M3.4 7.6 Q3.4 3.8 8.4 3.8 Q14 3.8 14 8 Q14 10.4 11.6 10.8 L11.8 13.4 L9.4 11.2 Q3.4 11.4 3.4 7.6 Z" fill="#fff"/><path d="M6.2 7.4 Q7.4 6 8.6 7.6 M9 8.6 Q10.4 8.8 11.2 7.2" stroke="#dd4a3d" stroke-width=".9" fill="none"/></svg></div>
<div class="abs" style="left:1611px;top:500.5px;width:16px;height:16px;border-radius:3.6px;background:#fff;border:1px solid #a9b0c8"></div>
<svg style="left:1635.4px;top:500.9px" width="16" height="16" viewBox="0 0 16 16"><rect x="0.8" y="0.9" width="10" height="10" rx="1.4" fill="#2e3348"/><rect x="5" y="5" width="10" height="10.1" rx="1.4" fill="#2e3348"/><rect x="4.45" y="4.45" width="6.9" height="6.9" rx="1.6" fill="none" stroke="#aeb2c0" stroke-width="1.15"/></svg>
<div class="abs" style="left:1659.3px;top:499.7px;width:17.6px;height:17.6px;border-radius:3.5px;overflow:hidden;background:#fff;border:1px solid #dde2ec;"><svg style="left:-1px;top:-1px" width="17.6" height="17.6" viewBox="0 0 17.6 17.6"><circle cx="8.8" cy="8.8" r="5.9" fill="#e01f2c"/><path d="M7.4 11 Q10 11.6 11.2 8.6" stroke="#fff" stroke-width="1.3" fill="none" stroke-linecap="round"/></svg></div>
<div class="abs" style="left:1611px;top:530.5px;width:16px;height:16px;border-radius:3.6px;background:#fff;border:1px solid #a9b0c8"></div>
<svg style="left:1635.4px;top:530.9px" width="16" height="16" viewBox="0 0 16 16"><rect x="0.8" y="0.9" width="10" height="10" rx="1.4" fill="#2e3348"/><rect x="5" y="5" width="10" height="10.1" rx="1.4" fill="#2e3348"/><rect x="4.45" y="4.45" width="6.9" height="6.9" rx="1.6" fill="none" stroke="#aeb2c0" stroke-width="1.15"/></svg>
<div class="abs" style="left:1659.3px;top:529.7px;width:17.6px;height:17.6px;border-radius:3.5px;overflow:hidden;background:#303135;"><svg style="left:0px;top:0px" width="17.6" height="17.6" viewBox="0 0 17.6 17.6"><path d="M4.8 2.4 H8.8 V15 H4.8 Z" fill="#f4d032"/><path d="M8.8 2.6 Q12.6 3 12.6 6.2 Q12.6 7.6 11.8 8.4 Q13.2 9.6 13.2 11.6 Q13.2 14.6 8.8 15 Z" fill="#5cb85c"/></svg></div>
<div class="abs" style="left:1611px;top:572px;width:211px;height:1px;background:#dfe2ec"></div>
<svg style="left:1611px;top:596px" width="18" height="18" viewBox="0 0 18 18"><circle cx="9" cy="9" r="7.4" fill="none" stroke="#2e3348" stroke-width="1.1"/><path d="M9 5 V13 M5 9 H13" stroke="#2e3348" stroke-width="1.1" fill="none" stroke-linecap="round"/></svg>

<div class="t" style="left:13.1px;top:21.1px;font-size:14px;line-height:18px;color:#7b8296;letter-spacing:-0.000px;transform:scaleX(1.0140);transform-origin:0 50%;-webkit-text-stroke-width:0px;">Market Explorer</div>
<div class="t" style="left:122.3px;top:21.1px;font-size:14px;line-height:18px;color:#7b8296;letter-spacing:1.020px;transform:scaleX(1.1200);transform-origin:0 50%;-webkit-text-stroke-width:0px;">/</div>
<div class="t" style="left:136.2px;top:21.1px;font-size:14px;line-height:18px;color:#2e3348;letter-spacing:0.000px;transform:scaleX(0.9839);transform-origin:0 50%;-webkit-text-stroke-width:0.15px;">Mental Health apps</div>
<div class="t" style="left:13.1px;top:76.3px;font-size:14px;line-height:18px;color:#2e3348;letter-spacing:0.000px;transform:scaleX(1.0195);transform-origin:0 50%;-webkit-text-stroke-width:0.05px;">Overview</div>
<div class="t" style="left:88.1px;top:76.3px;font-size:14px;line-height:18px;color:#3f7be0;letter-spacing:0.000px;transform:scaleX(0.9856);transform-origin:0 50%;-webkit-text-stroke-width:0.15px;">Performance</div>
<div class="t" style="left:183.3px;top:76.3px;font-size:14px;line-height:18px;color:#2e3348;letter-spacing:0.000px;transform:scaleX(0.9147);transform-origin:0 50%;-webkit-text-stroke-width:0.25px;">Rank</div>
<div class="t" style="left:229.3px;top:76.3px;font-size:14px;line-height:18px;color:#2e3348;letter-spacing:0.033px;-webkit-text-stroke-width:0.15px;">Retention</div>
<div class="t" style="left:305.0px;top:76.3px;font-size:14px;line-height:18px;color:#2e3348;letter-spacing:0.000px;transform:scaleX(0.9779);transform-origin:0 50%;-webkit-text-stroke-width:0.15px;">Audience</div>
<div class="t" style="left:378.3px;top:76.3px;font-size:14px;line-height:18px;color:#2e3348;letter-spacing:0.000px;transform:scaleX(0.9470);transform-origin:0 50%;-webkit-text-stroke-width:0.25px;">Reviews</div>
<div class="t" style="left:443.8px;top:76.3px;font-size:14px;line-height:18px;color:#2e3348;letter-spacing:0.000px;transform:scaleX(0.9253);transform-origin:0 50%;-webkit-text-stroke-width:0.25px;">X-Ray</div>
<div class="t" style="left:495.6px;top:76.3px;font-size:14px;line-height:18px;color:#2e3348;letter-spacing:-0.000px;transform:scaleX(1.0106);transform-origin:0 50%;-webkit-text-stroke-width:0.05px;">Advertising</div>
<div class="t" style="left:1493.9px;top:76.3px;font-size:14px;line-height:18px;color:#2e3348;letter-spacing:0.000px;transform:scaleX(1.0367);transform-origin:0 50%;-webkit-text-stroke-width:0.05px;">Worldwide</div>
<div class="t" style="left:1623.7px;top:76.3px;font-size:14px;line-height:18px;color:#2e3348;letter-spacing:0.000px;transform:scaleX(1.0532);transform-origin:0 50%;-webkit-text-stroke-width:0.05px;">01/01/2023 - 03/31/2023</div>
<div class="t" style="left:13.1px;top:135.9px;font-size:12.5px;line-height:16px;color:#2e3348;letter-spacing:0.000px;transform:scaleX(0.9008);transform-origin:0 50%;-webkit-text-stroke-width:0.25px;">Saved Views</div>
<div class="t" style="left:22.2px;top:170.0px;font-size:12px;line-height:16px;color:#8a6a14;letter-spacing:0.000px;transform:scaleX(0.9801);transform-origin:0 50%;-webkit-text-stroke-width:0.15px;">Downloads vs Market Average (modified)</div>
<div class="t" style="left:297.2px;top:170.0px;font-size:12px;line-height:16px;color:#2e3348;letter-spacing:0.000px;transform:scaleX(0.9663);transform-origin:0 50%;-webkit-text-stroke-width:0.15px;">Engagement vs Market Average</div>
<div class="t" style="left:492.9px;top:170.0px;font-size:12px;line-height:16px;color:#2e3348;letter-spacing:0.000px;transform:scaleX(0.9548);transform-origin:0 50%;-webkit-text-stroke-width:0.15px;">Total Sessions Store Comparison</div>
<div class="t" style="left:693.0px;top:170.0px;font-size:12px;line-height:16px;color:#2e3348;letter-spacing:0.000px;transform:scaleX(0.9709);transform-origin:0 50%;-webkit-text-stroke-width:0.15px;">IAP Store Comparison</div>
<div class="t" style="left:50.5px;top:246.1px;font-size:14px;line-height:18px;color:#2e3348;letter-spacing:0.000px;transform:scaleX(0.9846);transform-origin:0 50%;-webkit-text-stroke-width:0.15px;">Downloads</div>
<div class="t" style="left:171.2px;top:246.1px;font-size:14px;line-height:18px;color:#2e3348;letter-spacing:0.000px;transform:scaleX(0.9143);transform-origin:0 50%;-webkit-text-stroke-width:0.25px;">vs</div>
<div class="t" style="left:229.4px;top:246.1px;font-size:14px;line-height:18px;color:#2e3348;letter-spacing:0.000px;transform:scaleX(0.9851);transform-origin:0 50%;-webkit-text-stroke-width:0.15px;">Market Average (Downloads)</div>
<div class="t" style="left:1205.7px;top:246.1px;font-size:14px;line-height:18px;color:#2e3348;letter-spacing:0.000px;transform:scaleX(0.9668);transform-origin:0 50%;-webkit-text-stroke-width:0.15px;">% Change (Intraperiod)</div>
<div class="t" style="left:1409.1px;top:246.1px;font-size:14px;line-height:18px;color:#2e3348;letter-spacing:0.019px;-webkit-text-stroke-width:0.15px;">Daily</div>
<div class="t" style="left:1217.9px;top:307.1px;font-size:15px;line-height:20px;color:#2e3348;letter-spacing:0.000px;transform:scaleX(1.1029);transform-origin:0 50%;-webkit-text-stroke-width:0.05px;">Metric View</div>
<div class="t" style="left:1217.9px;top:330.2px;font-size:13px;line-height:17px;color:#5f6578;letter-spacing:0.000px;transform:scaleX(1.0600);transform-origin:0 50%;-webkit-text-stroke-width:0px;">Metric value over the selected date</div>
<div class="t" style="left:1217.9px;top:350.0px;font-size:13px;line-height:17px;color:#5f6578;letter-spacing:0.000px;transform:scaleX(0.9898);transform-origin:0 50%;-webkit-text-stroke-width:0.05px;">range.</div>
<div class="t" style="left:1217.9px;top:390.9px;font-size:15px;line-height:20px;color:#3f7be0;letter-spacing:0.000px;transform:scaleX(1.0326);transform-origin:0 50%;-webkit-text-stroke-width:0.05px;">% Change (Intraperiod)</div>
<div class="t" style="left:1217.9px;top:414.0px;font-size:13px;line-height:17px;color:#3f7be0;letter-spacing:0.000px;transform:scaleX(1.0593);transform-origin:0 50%;-webkit-text-stroke-width:0.05px;">Percent change of the metric from the</div>
<div class="t" style="left:1217.9px;top:433.2px;font-size:13px;line-height:17px;color:#3f7be0;letter-spacing:0.000px;transform:scaleX(1.0495);transform-origin:0 50%;-webkit-text-stroke-width:0.05px;">start of the selected date range.</div>
<div class="t" style="left:1217.9px;top:474.1px;font-size:15px;line-height:20px;color:#2e3348;letter-spacing:0.000px;transform:scaleX(1.0146);transform-origin:0 50%;-webkit-text-stroke-width:0.05px;">% Change (Period over Period)</div>
<div class="t" style="left:1217.9px;top:497.2px;font-size:13px;line-height:17px;color:#5f6578;letter-spacing:0.000px;transform:scaleX(1.0593);transform-origin:0 50%;-webkit-text-stroke-width:0px;">Percent change of the metric from the</div>
<div class="t" style="left:1217.9px;top:516.2px;font-size:13px;line-height:17px;color:#5f6578;letter-spacing:0.000px;transform:scaleX(1.0699);transform-origin:0 50%;-webkit-text-stroke-width:0px;">previous period within the selected</div>
<div class="t" style="left:1217.9px;top:536.0px;font-size:13px;line-height:17px;color:#5f6578;letter-spacing:0.000px;transform:scaleX(1.0261);transform-origin:0 50%;-webkit-text-stroke-width:0px;">date range.</div>
<div class="t" style="left:1217.9px;top:577.2px;font-size:15px;line-height:20px;color:#2e3348;letter-spacing:0.000px;transform:scaleX(1.0450);transform-origin:0 50%;-webkit-text-stroke-width:0.05px;">Market Share</div>
<div class="t" style="left:1217.9px;top:600.0px;font-size:13px;line-height:17px;color:#5f6578;letter-spacing:-0.000px;transform:scaleX(1.0661);transform-origin:0 50%;-webkit-text-stroke-width:0px;">Percent share of the total market for</div>
<div class="t" style="left:1217.9px;top:619.3px;font-size:13px;line-height:17px;color:#5f6578;letter-spacing:0.000px;transform:scaleX(1.0649);transform-origin:0 50%;-webkit-text-stroke-width:0px;">the selected metric and entity.</div>
<div class="t" style="left:1474.5px;top:294.0px;font-size:18.5px;line-height:24px;color:#dfe2e7;letter-spacing:0.031px;-webkit-text-stroke:0;">apptopia</div>
<div class="t" style="left:1610.8px;top:137.7px;font-size:15.2px;line-height:20px;color:#2e3348;letter-spacing:-0.000px;transform:scaleX(1.0711);transform-origin:0 50%;-webkit-text-stroke-width:0.05px;">Market Entities</div>
<div class="t" style="left:1728.4px;top:138.5px;font-size:13.5px;line-height:18px;color:#3f7be0;letter-spacing:0.000px;transform:scaleX(1.0354);transform-origin:0 50%;-webkit-text-stroke-width:0.05px;">Edit market</div>
<div class="t" style="left:1610.7px;top:158.9px;font-size:12px;line-height:16px;color:#7b8296;letter-spacing:0.000px;transform:scaleX(0.9834);transform-origin:0 50%;-webkit-text-stroke-width:0.05px;">Select up to eight market entities.</div>
<div class="t" style="left:1685.3px;top:201.1px;font-size:12px;line-height:16px;color:#2e3348;letter-spacing:-0.025px;-webkit-text-stroke-width:0.15px;">BetterHelp - Therapy</div>
<div class="t" style="left:1685.3px;top:231.0px;font-size:12px;line-height:16px;color:#2e3348;letter-spacing:0.020px;-webkit-text-stroke-width:0.15px;">BetterMe: Health Coac<span style="letter-spacing:-0.9px">...</span></div>
<div class="t" style="left:1685.3px;top:261.0px;font-size:12px;line-height:16px;color:#2e3348;letter-spacing:0.000px;transform:scaleX(1.0170);transform-origin:0 50%;-webkit-text-stroke-width:0.05px;">BetterMe: Mental Health</div>
<div class="t" style="left:1685.3px;top:290.9px;font-size:12px;line-height:16px;color:#2e3348;letter-spacing:0.000px;transform:scaleX(0.9566);transform-origin:0 50%;-webkit-text-stroke-width:0.15px;">Calm</div>
<div class="t" style="left:1685.3px;top:320.9px;font-size:12px;line-height:16px;color:#2e3348;letter-spacing:0.000px;transform:scaleX(0.9832);transform-origin:0 50%;-webkit-text-stroke-width:0.15px;">Happify: for Stress &amp; W<span style="letter-spacing:-0.9px">...</span></div>
<div class="t" style="left:1685.3px;top:350.9px;font-size:12px;line-height:16px;color:#2e3348;letter-spacing:0.000px;transform:scaleX(0.9918);transform-origin:0 50%;-webkit-text-stroke-width:0.15px;">Headspace: Mindful Me<span style="letter-spacing:-0.9px">...</span></div>
<div class="t" style="left:1685.3px;top:380.8px;font-size:12px;line-height:16px;color:#2e3348;letter-spacing:0.000px;transform:scaleX(1.0224);transform-origin:0 50%;-webkit-text-stroke-width:0.05px;">Insight Timer–Meditate <span style="letter-spacing:-0.9px">...</span></div>
<div class="t" style="left:1685.3px;top:410.8px;font-size:12px;line-height:16px;color:#2e3348;letter-spacing:-0.005px;-webkit-text-stroke-width:0.15px;">Meditopia: Sleep, Medit<span style="letter-spacing:-0.9px">...</span></div>
<div class="t" style="left:1685.3px;top:440.7px;font-size:12px;line-height:16px;color:#2e3348;letter-spacing:0.001px;-webkit-text-stroke-width:0.15px;">Noom: Healthy Weight <span style="letter-spacing:-0.9px">...</span></div>
<div class="t" style="left:1685.3px;top:470.6px;font-size:12px;line-height:16px;color:#2e3348;letter-spacing:0.000px;transform:scaleX(1.0147);transform-origin:0 50%;-webkit-text-stroke-width:0.05px;">Smiling Mind: Meditatio<span style="letter-spacing:-0.9px">...</span></div>
<div class="t" style="left:1685.3px;top:500.6px;font-size:12px;line-height:16px;color:#2e3348;letter-spacing:0.000px;transform:scaleX(0.9904);transform-origin:0 50%;-webkit-text-stroke-width:0.15px;">Ten Percent Happier Me<span style="letter-spacing:-0.9px">...</span></div>
<div class="t" style="left:1685.3px;top:530.5px;font-size:12px;line-height:16px;color:#2e3348;letter-spacing:0.000px;transform:scaleX(1.0121);transform-origin:0 50%;-webkit-text-stroke-width:0.05px;">buddhify: meditation on<span style="letter-spacing:-0.9px">...</span></div>
<div class="t" style="left:1636.2px;top:596.9px;font-size:12px;line-height:16px;color:#2e3348;letter-spacing:0.000px;transform:scaleX(0.9820);transform-origin:0 50%;-webkit-text-stroke-width:0.15px;">Add Temporary Comparison</div>
<div class="t" style="left:28.8px;top:375.6px;font-size:11.5px;line-height:15px;color:#3ecf7a;letter-spacing:0.000px;transform:scaleX(0.9109);transform-origin:0 50%;-webkit-text-stroke-width:0.25px;">180%</div>
<div class="t" style="left:28.8px;top:433.1px;font-size:11.5px;line-height:15px;color:#3ecf7a;letter-spacing:0.000px;transform:scaleX(0.9109);transform-origin:0 50%;-webkit-text-stroke-width:0.25px;">120%</div>
<div class="t" style="left:34.4px;top:491.1px;font-size:11.5px;line-height:15px;color:#3ecf7a;letter-spacing:0.000px;transform:scaleX(0.9205);transform-origin:0 50%;-webkit-text-stroke-width:0.25px;">60%</div>
<div class="t" style="left:41.3px;top:548.7px;font-size:11.5px;line-height:15px;color:#7b8296;letter-spacing:-0.375px;transform:scaleX(0.8800);transform-origin:0 50%;-webkit-text-stroke-width:0.15px;">0%</div>
<div class="t" style="left:81.5px;top:687.1px;font-size:12px;line-height:16px;color:#7b8296;letter-spacing:0.000px;transform:scaleX(0.9196);transform-origin:0 50%;-webkit-text-stroke-width:0.15px;">Jan 2</div>
<div class="t" style="left:195.9px;top:687.1px;font-size:12px;line-height:16px;color:#7b8296;letter-spacing:0.000px;transform:scaleX(0.9196);transform-origin:0 50%;-webkit-text-stroke-width:0.15px;">Jan 9</div>
<div class="t" style="left:306.7px;top:687.1px;font-size:12px;line-height:16px;color:#7b8296;letter-spacing:0.000px;transform:scaleX(0.9436);transform-origin:0 50%;-webkit-text-stroke-width:0.15px;">Jan 16</div>
<div class="t" style="left:421.5px;top:687.1px;font-size:12px;line-height:16px;color:#7b8296;letter-spacing:0.000px;transform:scaleX(0.9436);transform-origin:0 50%;-webkit-text-stroke-width:0.15px;">Jan 23</div>
<div class="t" style="left:536.0px;top:687.1px;font-size:12px;line-height:16px;color:#7b8296;letter-spacing:0.000px;transform:scaleX(0.9436);transform-origin:0 50%;-webkit-text-stroke-width:0.15px;">Jan 30</div>
<div class="t" style="left:653.5px;top:687.1px;font-size:12px;line-height:16px;color:#7b8296;letter-spacing:-0.000px;transform:scaleX(0.9124);transform-origin:0 50%;-webkit-text-stroke-width:0.15px;">Feb 6</div>
<div class="t" style="left:764.5px;top:687.1px;font-size:12px;line-height:16px;color:#7b8296;letter-spacing:0.000px;transform:scaleX(0.9368);transform-origin:0 50%;-webkit-text-stroke-width:0.15px;">Feb 13</div>
<div class="t" style="left:879.2px;top:687.1px;font-size:12px;line-height:16px;color:#7b8296;letter-spacing:0.000px;transform:scaleX(0.9368);transform-origin:0 50%;-webkit-text-stroke-width:0.15px;">Feb 20</div>
<div class="t" style="left:993.7px;top:687.1px;font-size:12px;line-height:16px;color:#7b8296;letter-spacing:0.000px;transform:scaleX(0.9368);transform-origin:0 50%;-webkit-text-stroke-width:0.15px;">Feb 27</div>
<div class="t" style="left:1110.7px;top:687.1px;font-size:12px;line-height:16px;color:#7b8296;letter-spacing:-0.022px;-webkit-text-stroke-width:0.05px;">Mar 6</div>
<div class="t" style="left:1221.8px;top:687.1px;font-size:12px;line-height:16px;color:#7b8296;letter-spacing:0.000px;transform:scaleX(1.0064);transform-origin:0 50%;-webkit-text-stroke-width:0px;">Mar 13</div>
<div class="t" style="left:1336.4px;top:687.1px;font-size:12px;line-height:16px;color:#7b8296;letter-spacing:0.000px;transform:scaleX(1.0064);transform-origin:0 50%;-webkit-text-stroke-width:0px;">Mar 20</div>
<div class="t" style="left:1451.5px;top:687.1px;font-size:12px;line-height:16px;color:#7b8296;letter-spacing:0.000px;transform:scaleX(1.0064);transform-origin:0 50%;-webkit-text-stroke-width:0px;">Mar 27</div>
</div>
</body>
</html>
